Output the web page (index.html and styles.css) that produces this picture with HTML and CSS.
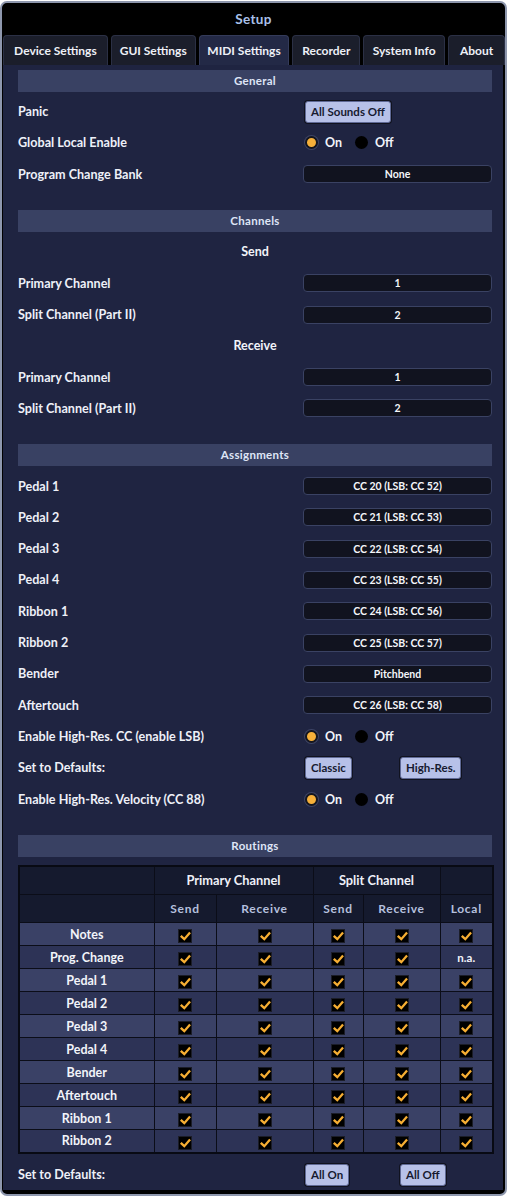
FILE: index.html
```html
<!DOCTYPE html>
<html>
<head>
<meta charset="utf-8">
<link rel="stylesheet" href="styles.css">
</head>
<body>
<div class="window">
  <div class="title">Setup</div>
  <div class="tabs">
    <div class="tab t1">Device Settings</div>
    <div class="tab t2">GUI Settings</div>
    <div class="tab t3 active">MIDI Settings</div>
    <div class="tab t4">Recorder</div>
    <div class="tab t5">System Info</div>
    <div class="tab t6">About</div>
  </div>
  <div class="content">
    <div class="section">
      <div class="shead">General</div>
      <div class="row"><div class="label">Panic</div><div class="ctl"><button class="btn">All Sounds Off</button></div></div>
      <div class="row"><div class="label">Global Local Enable</div><div class="ctl"><div class="radios"><span class="dot on"></span><span class="rt">On</span><span class="dot off"></span><span class="rt">Off</span></div></div></div>
      <div class="row"><div class="label">Program Change Bank</div><div class="ctl"><div class="select">None</div></div></div>
    </div>
    <div class="section">
      <div class="shead">Channels</div>
      <div class="row sub">Send</div>
      <div class="row"><div class="label">Primary Channel</div><div class="ctl"><div class="select">1</div></div></div>
      <div class="row"><div class="label">Split Channel (Part II)</div><div class="ctl"><div class="select">2</div></div></div>
      <div class="row sub">Receive</div>
      <div class="row"><div class="label">Primary Channel</div><div class="ctl"><div class="select">1</div></div></div>
      <div class="row"><div class="label">Split Channel (Part II)</div><div class="ctl"><div class="select">2</div></div></div>
    </div>
    <div class="section">
      <div class="shead">Assignments</div>
      <div class="row"><div class="label">Pedal 1</div><div class="ctl"><div class="select">CC 20 (LSB: CC 52)</div></div></div>
      <div class="row"><div class="label">Pedal 2</div><div class="ctl"><div class="select">CC 21 (LSB: CC 53)</div></div></div>
      <div class="row"><div class="label">Pedal 3</div><div class="ctl"><div class="select">CC 22 (LSB: CC 54)</div></div></div>
      <div class="row"><div class="label">Pedal 4</div><div class="ctl"><div class="select">CC 23 (LSB: CC 55)</div></div></div>
      <div class="row"><div class="label">Ribbon 1</div><div class="ctl"><div class="select">CC 24 (LSB: CC 56)</div></div></div>
      <div class="row"><div class="label">Ribbon 2</div><div class="ctl"><div class="select">CC 25 (LSB: CC 57)</div></div></div>
      <div class="row"><div class="label">Bender</div><div class="ctl"><div class="select">Pitchbend</div></div></div>
      <div class="row"><div class="label">Aftertouch</div><div class="ctl"><div class="select">CC 26 (LSB: CC 58)</div></div></div>
      <div class="row"><div class="label">Enable High-Res. CC (enable LSB)</div><div class="ctl"><div class="radios"><span class="dot on"></span><span class="rt">On</span><span class="dot off"></span><span class="rt">Off</span></div></div></div>
      <div class="row"><div class="label">Set to Defaults:</div><div class="ctl pair"><button class="btn">Classic</button><button class="btn">High-Res.</button></div></div>
      <div class="row"><div class="label">Enable High-Res. Velocity (CC 88)</div><div class="ctl"><div class="radios"><span class="dot on"></span><span class="rt">On</span><span class="dot off"></span><span class="rt">Off</span></div></div></div>
    </div>
    <div class="section last">
      <div class="shead">Routings</div>
      <table class="routing">
        <colgroup><col class="c0"><col class="c1"><col class="c2"><col class="c3"><col class="c4"><col class="c5"></colgroup>
        <thead>
          <tr class="h1"><th></th><th colspan="2">Primary Channel</th><th colspan="2">Split Channel</th><th></th></tr>
          <tr class="h2"><th></th><th>Send</th><th>Receive</th><th>Send</th><th>Receive</th><th>Local</th></tr>
        </thead>
        <tbody id="rows"></tbody>
      </table>
      <div class="row bottom"><div class="label">Set to Defaults:</div><div class="ctl pair"><button class="btn">All On</button><button class="btn">All Off</button></div></div>
    </div>
  </div>
</div>
<script src="app.js"></script>
</body>
</html>
```

FILE: app.js
```js
var names = ["Notes","Prog. Change","Pedal 1","Pedal 2","Pedal 3","Pedal 4","Bender","Aftertouch","Ribbon 1","Ribbon 2"];
var check = '<span class="cb"><svg width="13" height="13" viewBox="0 0 13 13"><path d="M2.6 6.6 L5.3 9.2 L10.3 3.4" fill="none" stroke="#f6ae33" stroke-width="2.3" stroke-linecap="square" stroke-linejoin="miter"/></svg></span>';
var html = "";
names.forEach(function (n, i) {
  html += '<tr class="' + (i % 2 === 0 ? "odd" : "even") + '"><td class="nm">' + n + '</td>';
  for (var c = 0; c < 5; c++) {
    if (c === 4 && n === "Prog. Change") html += '<td class="na">n.a.</td>';
    else html += '<td>' + check + '</td>';
  }
  html += '</tr>';
});
document.getElementById("rows").innerHTML = html;
```

FILE: styles.css
```css
* { box-sizing: border-box; }
html, body { margin: 0; padding: 0; background: #fff; }
body { font-family: Lato, "Open Sans", sans-serif; }

.window {
  width: 507px;
  margin-top: 1px;
  border: 2px solid #8e97ad;
  border-radius: 7px;
  background: #000;
  overflow: hidden;
  padding-bottom: 4px;
}
.title {
  height: 32px;
  display: flex;
  align-items: center;
  justify-content: center;
  color: #a9c0ea;
  font-size: 13.5px;
  font-weight: 700;
  letter-spacing: 0.3px;
}
.tabs { display: flex; gap: 3px; padding-left: 1px; height: 30px; }
.tab {
  height: 30px;
  background: #1b1e2b;
  border: 1px solid #2b3045;
  border-bottom: none;
  border-radius: 4px 4px 0 0;
  color: #eef0f7;
  font-weight: 700;
  font-size: 12px;
  display: flex;
  align-items: center;
  justify-content: center;
}
.tab.active { background: #232946; border-color: #343b5a; }
.t1 { width: 105px; }
.t2 { width: 85px; }
.t3 { width: 91px; }
.t4 { width: 68px; }
.t5 { width: 82px; }
.t6 { width: 57px; }

.content {
  margin: 0 2px 0 1px;
  background: #1f2441;
  padding: 5px 11px 0 15px;
}
.section { margin-bottom: 20.4px; }
.section.last { margin-bottom: 0; }
.shead {
  height: 22px;
  line-height: 22px;
  background: #394163;
  color: #dfe5f6;
  font-weight: 700;
  font-size: 11.5px;
  text-align: center;
  margin-bottom: 4px;
  letter-spacing: 0.3px;
}
.row {
  display: grid;
  grid-template-columns: 285px 189px;
  height: 31.3px;
  align-items: center;
}
.row.sub {
  display: flex;
  justify-content: center;
  color: #f2f4fa;
  font-weight: 700;
  font-size: 12.5px;
}
.label { color: #eef0f8; font-weight: 700; font-size: 12.6px; }
.ctl { display: flex; align-items: center; }
.select {
  width: 189px;
  height: 18px;
  background: #11131f;
  border: 1px solid #3a4263;
  border-radius: 4px;
  color: #f5f6fa;
  font-weight: 700;
  font-size: 10.5px;
  display: flex;
  align-items: center;
  justify-content: center;
}
.btn {
  font-family: inherit;
  height: 22px;
  padding: 0 5px;
  margin-left: 2px;
  background: #b7c1e8;
  color: #161a30;
  border: 1px solid #5f6995;
  border-radius: 3px;
  box-shadow: 0 0 0 1px #10121f;
  font-weight: 700;
  font-size: 11.5px;
}
.pair { display: grid; grid-template-columns: 95px 95px; justify-items: start; }
.radios { display: flex; align-items: center; margin-left: 2px; }
.dot { width: 13px; height: 13px; border-radius: 50%; display: inline-block; }
.dot.on { background: #f6b03a; border: 2px solid #15161f; box-shadow: 0 0 0 1px #3d4466; }
.dot.off { background: #000; margin-left: 13px; }
.rt { color: #f2f4fa; font-weight: 700; font-size: 12.5px; margin-left: 7px; }

.routing {
  width: 474px;
  margin-top: 7.4px;
  border-collapse: collapse;
  border: 2px solid #080a13;
  table-layout: fixed;
}
.c0 { width: 135px; }
.c1 { width: 62px; }
.c2 { width: 97px; }
.c3 { width: 50px; }
.c4 { width: 77px; }
.c5 { width: 53px; }
.routing th, .routing td {
  border: 1px solid #0b0d18;
  text-align: center;
  padding: 0;
}
.routing th { background: #151a2e; }
.h1 th { height: 29px; color: #eef0f8; font-weight: 700; font-size: 12.8px; }
.h2 th { height: 28px; color: #b5c0de; font-weight: 700; font-size: 12px; letter-spacing: 0.7px; }
.routing td { height: 23px; }
.odd td { background: #3a4166; }
.even td { background: #2d3356; }
.nm { color: #f2f4fa; font-weight: 700; font-size: 12.5px; }
.na { color: #f2f4fa; font-weight: 700; font-size: 11.5px; }
.cb {
  display: inline-block;
  width: 14px;
  height: 14px;
  background: #000;
  border: 1px solid #1b1d28;
  vertical-align: middle;
  line-height: 0;
}
.cb svg { display: block; }
.row.bottom { margin-top: 5.4px; }
```
